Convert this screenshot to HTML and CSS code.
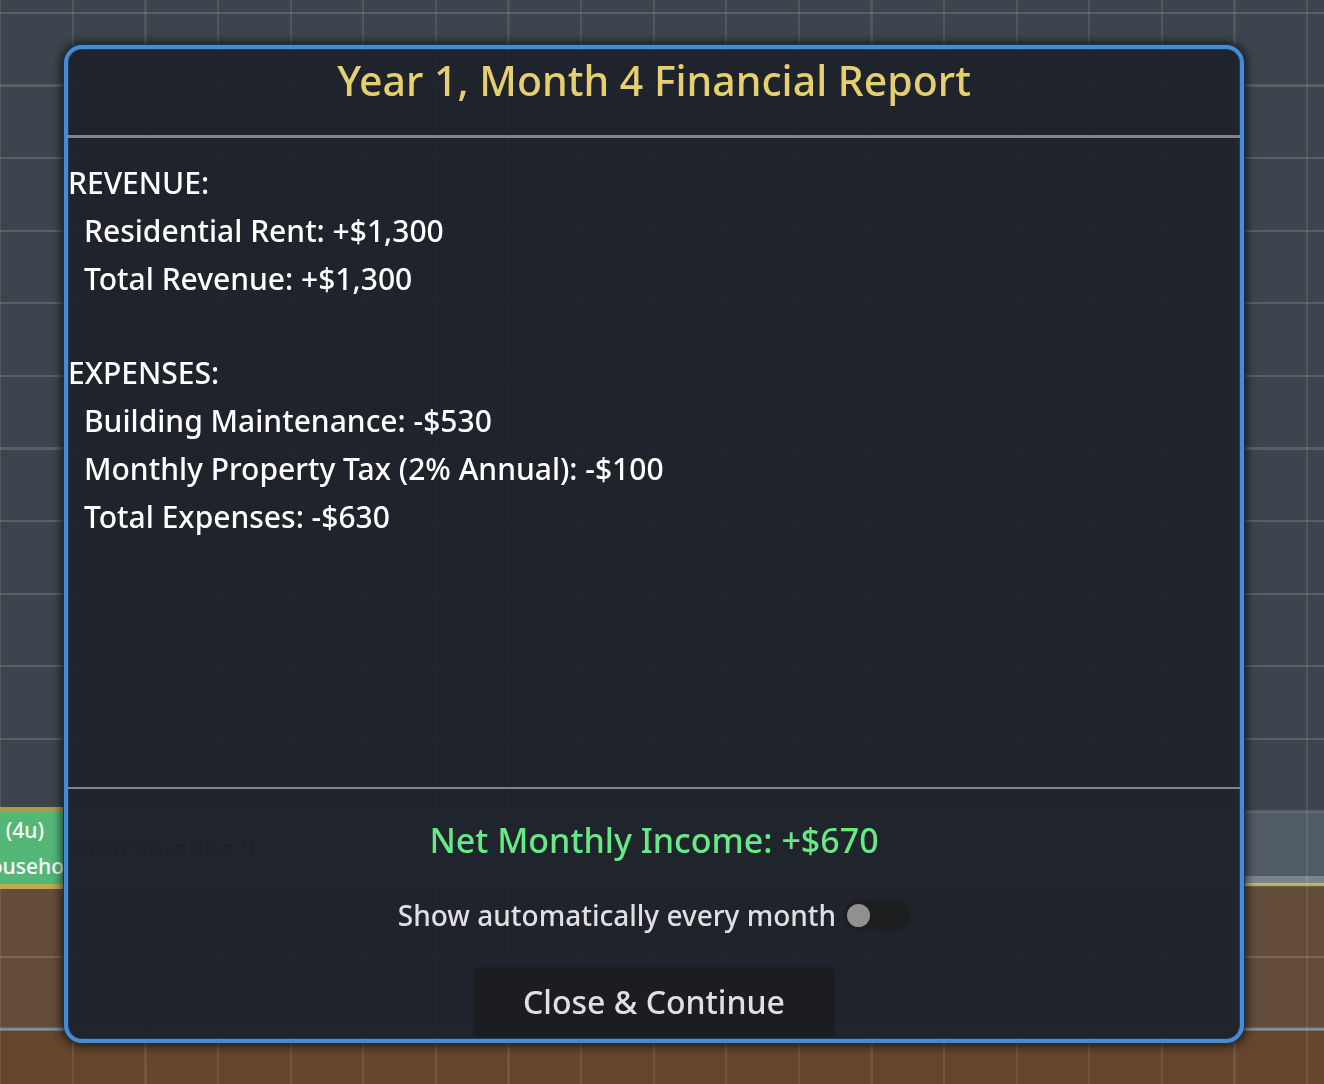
FILE: index.html
```html
<!DOCTYPE html>
<html lang="en">
<head>
<meta charset="utf-8">
<meta name="viewport" content="width=device-width, initial-scale=1">
<title>Financial Report</title>
<link rel="stylesheet" href="styles.css">
</head>
<body>
<div class="scene">
  <div class="sky"></div>
  <div class="floor"></div>
  <div class="slab"></div>
  <div class="ground-line"></div>
  <div class="basement"></div>
  <div class="depth-line"></div>
  <div class="bedrock"></div>
  <div class="grid"></div>
  <div class="unit"><span>(4u)</span><span>ouseho</span></div>
  <div class="riser">Utility Riser (Tier 1)</div>
</div>

<main class="stage">
  <section class="report" role="dialog" aria-labelledby="report-title">
    <h1 class="title" id="report-title">Year 1, Month 4 Financial Report</h1>
    <div class="details">
      <section>
        <h2 class="heading">REVENUE:</h2>
        <ul class="entries">
          <li>Residential Rent: +$1,300</li>
          <li>Total Revenue: +$1,300</li>
        </ul>
      </section>
      <section>
        <h2 class="heading">EXPENSES:</h2>
        <ul class="entries">
          <li>Building Maintenance: -$530</li>
          <li>Monthly Property Tax (2% Annual): -$100</li>
          <li>Total Expenses: -$630</li>
        </ul>
      </section>
    </div>
    <footer class="summary">
      <p class="net">Net Monthly Income: +$670</p>
      <div class="auto">
        <label for="auto-show">Show automatically every month</label>
        <input class="switch" type="checkbox" role="switch" id="auto-show">
      </div>
      <button class="close" type="button">Close &amp; Continue</button>
    </footer>
  </section>
</main>
</body>
</html>
```

FILE: styles.css
```css
* {
  box-sizing: border-box;
}

body,
h1,
h2,
p,
ul {
  margin: 0;
  padding: 0;
}

body {
  font-family: "Noto Sans", "Open Sans", sans-serif;
  font-weight: 500;
  color: #fff;
  background: #3d464f;
}

/* Building view behind the dialog */
.scene {
  position: fixed;
  inset: 0;
  display: flex;
  flex-direction: column;
  overflow: hidden;
}

.sky {
  flex: 1;
  background: #3c454e;
}

.floor {
  height: 64px;
  background: #505b65;
}

.slab {
  height: 7px;
  background: #7b858e;
}

.ground-line {
  height: 4px;
  background: #c1a552;
  border-bottom: 1px solid #5f6659;
}

.basement {
  height: 140px;
  background: #634c3a;
}

.depth-line {
  height: 4px;
  background: #6b7b84;
  border-top: 1px solid #6a5f56;
}

.bedrock {
  height: 53px;
  background: #64452d;
}

/* Five cells span 363px */
.grid {
  --line: rgba(255, 255, 255, 0.09);
  --row: rgba(255, 255, 255, 0.14);
  position: absolute;
  inset: 0;
  background-image:
    linear-gradient(90deg,
      var(--line) 1px, transparent 1px 72px,
      var(--line) 72px 74px, transparent 74px 144px,
      var(--line) 144px 147px, transparent 147px 217px,
      var(--line) 217px 219px, transparent 219px 290px,
      var(--line) 290px 292px, transparent 292px 362px,
      var(--line) 362px),
    linear-gradient(
      var(--row) 2px, transparent 2px 72px,
      var(--row) 72px 75px, transparent 75px 145px,
      var(--row) 145px 147px, transparent 147px 218px,
      var(--row) 218px 220px, transparent 220px 290px,
      var(--row) 290px 292px, transparent 292px);
  background-size: 363px 100%, 100% 363px;
  background-position: 0 0, 0 12px;
}

.unit {
  position: absolute;
  left: -64px;
  bottom: 195px;
  width: 130px;
  height: 82px;
  display: flex;
  flex-direction: column;
  justify-content: center;
  align-items: flex-end;
  border-top: 5px solid #ad984d;
  border-bottom: 5px solid #c2a94f;
  padding-right: 2px;
  background: #54b778;
  font-size: 21px;
  line-height: 36px;
}

.unit span:first-child {
  padding-right: 20px;
}

.riser {
  position: absolute;
  left: 74px;
  bottom: 222px;
  font-size: 20px;
  line-height: 28px;
  color: #000;
}

/* Dialog */
.stage {
  position: relative;
  display: flex;
  min-height: 100vh;
  padding: 45px 80px 41px 64px;
}

.report {
  flex: 1;
  display: flex;
  flex-direction: column;
  border: 4px solid #468bd3;
  border-radius: 18px;
  background: rgba(31, 35, 44, 0.98);
  background-clip: padding-box;
  box-shadow:
    inset 0 0 0 1px #1c3b5d,
    0 0 0 1px #1c3346,
    0 0 10px 3px rgba(0, 0, 0, 0.65);
}

.title {
  padding: 2px 0 26px;
  border-bottom: 3px solid #838383;
  color: #e6cf6e;
  font-size: 41px;
  font-weight: 500;
  line-height: 58px;
  text-align: center;
}

.details {
  flex: 1;
  display: flex;
  flex-direction: column;
  gap: 46px;
  padding: 21px 0;
  font-size: 30px;
  line-height: 48px;
}

.heading {
  font-size: 30px;
  font-weight: 500;
}

.entries {
  padding-left: 16px;
  list-style: none;
}

.summary {
  display: flex;
  flex-direction: column;
  align-items: center;
  border-top: 2px solid #838383;
  padding: 26px 0 1px;
}

.net {
  color: #67e984;
  font-size: 34px;
  line-height: 50px;
}

.auto {
  display: flex;
  align-items: center;
  gap: 8px;
  margin: 30px 0 32px;
  color: #e0e0e2;
  font-size: 28px;
  line-height: 40px;
}

.switch {
  appearance: none;
  display: flex;
  align-items: center;
  width: 66px;
  height: 32px;
  margin: 0;
  padding: 0 3px;
  border-radius: 16px;
  background: #1d1e20;
}

.switch::before {
  content: "";
  width: 23px;
  height: 23px;
  border-radius: 50%;
  background: #909091;
}

.switch:checked {
  justify-content: flex-end;
}

.close {
  padding: 0 50px 1px;
  border: 0;
  border-radius: 6px;
  background: #1c1d20;
  color: #e0e0e2;
  font: inherit;
  font-size: 32px;
  line-height: 70px;
}
```
